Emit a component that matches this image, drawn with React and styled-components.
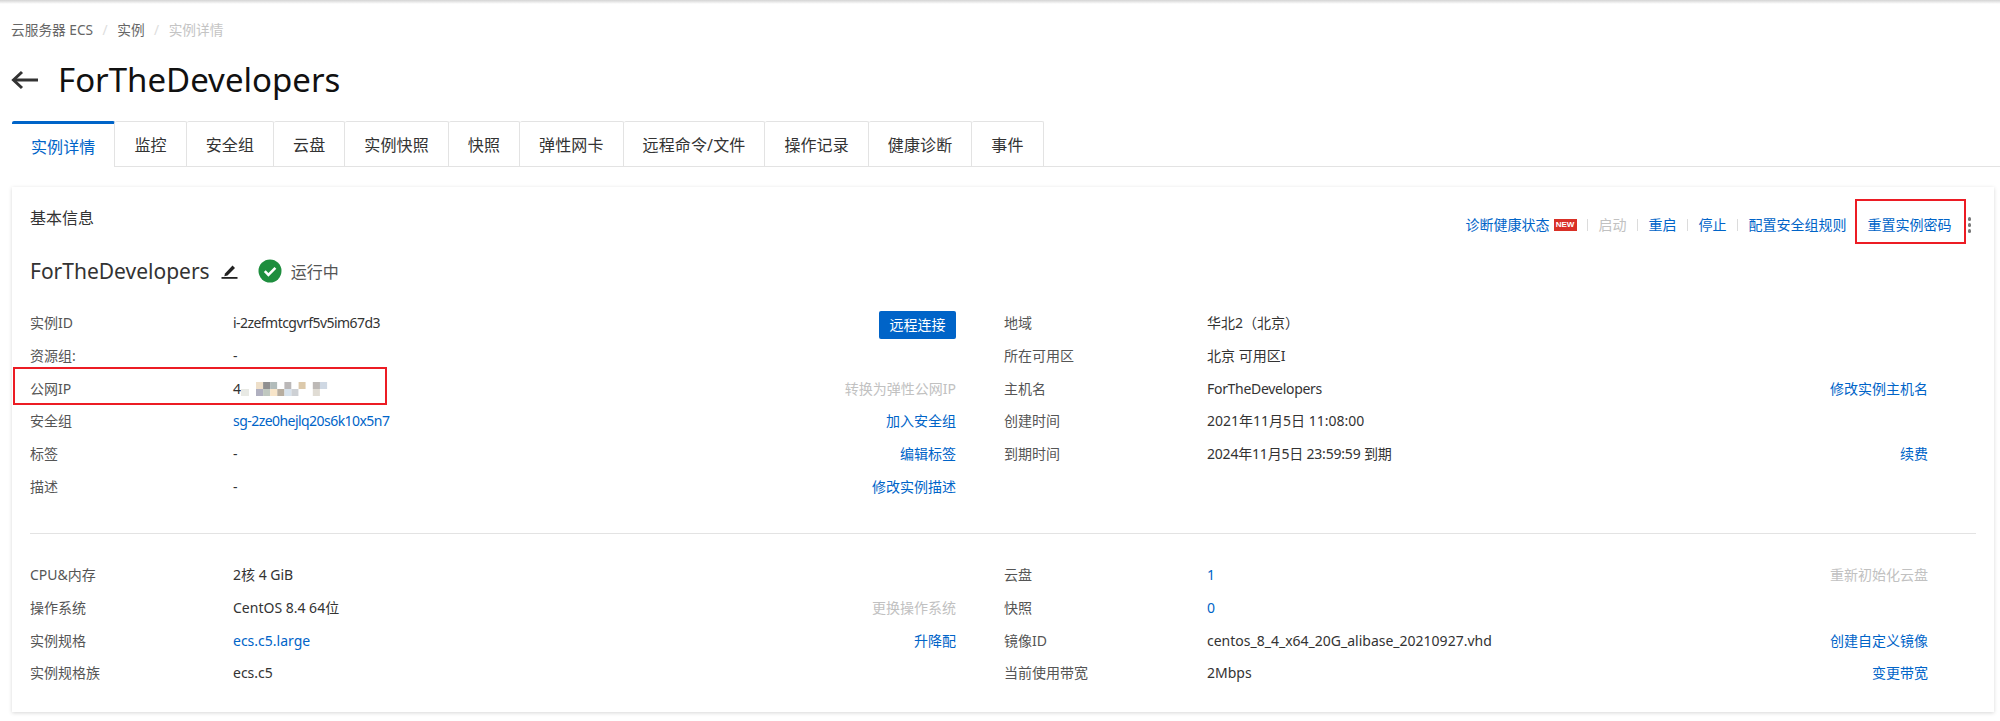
import React from 'react';
import styled, { createGlobalStyle } from 'styled-components';

const GlobalStyle = createGlobalStyle`
  html, body {
    margin: 0;
    padding: 0;
    background: #fff;
    font-family: "Noto Sans", "Noto Sans CJK SC", "Liberation Sans", sans-serif;
    font-size: 14px;
    color: #333;
  }
`;

const Page = styled.div`
  width: 2000px;
  height: 721px;
  overflow: hidden;
  position: relative;
  box-sizing: border-box;
  padding: 0 6px 0 12px;
`;

const TopShadow = styled.div`
  position: absolute;
  top: 0;
  left: 0;
  right: 0;
  height: 4px;
  background: linear-gradient(#d4d4d4, #fff);
`;

const Breadcrumb = styled.div`
  display: flex;
  align-items: center;
  height: 20px;
  padding-top: 20px;
  margin-left: -1px;
  color: #666;
  font-size: 13.7px;
  line-height: 20px;
`;

const Crumb = styled.span`
  color: ${props => (props.$current ? '#c4c4c4' : '#666')};
`;

const CrumbSep = styled.span`
  color: #ddd;
  margin: 0 9.5px;
`;

const TitleRow = styled.div`
  display: flex;
  align-items: center;
  height: 44px;
  margin: 18px 0 0 -1px;
  gap: 20px;
`;

const PageTitle = styled.h1`
  margin: 0;
  font-size: 33px;
  font-weight: 400;
  color: #111;
  line-height: 44px;
`;

const Tabs = styled.div`
  display: flex;
  margin: 19px -6px 0 0;
  height: 45px;
  border-bottom: 1px solid #e3e3e3;
`;

const Tab = styled.div`
  box-sizing: border-box;
  height: ${props => (props.$active ? '46px' : '45px')};
  padding: 0 19px;
  display: flex;
  align-items: center;
  font-size: 16px;
  letter-spacing: 0.12px;
  background: #fff;
  color: ${props => (props.$active ? '#0064c8' : '#333')};
  border: 1px solid #e3e3e3;
  border-left: none;
  border-top: ${props => (props.$active ? '3px solid #0064c8' : '1px solid #e3e3e3')};
  border-bottom: none;
  border-radius: 2px 2px 0 0;
`;

const Card = styled.section`
  margin-top: 20px;
  height: 525px;
  box-sizing: border-box;
  background: #fff;
  padding: 0 18px;
  box-shadow: 0 1px 4px rgba(0, 0, 0, 0.16);
`;

const CardHeader = styled.div`
  display: flex;
  justify-content: space-between;
  align-items: flex-start;
  height: 59px;
`;

const CardTitle = styled.h2`
  margin: 20px 0 0;
  font-size: 16px;
  font-weight: 400;
  line-height: 22px;
  color: #333;
`;

const ActionBar = styled.div`
  display: flex;
  align-items: center;
  height: 20px;
  margin: 28px 5px 0 0;
`;

const Action = styled.a`
  position: relative;
  color: ${props => (props.$disabled ? '#c1c1c1' : '#0064c8')};
  font-size: 14px;
  line-height: 20px;
  white-space: nowrap;
`;

const NewBadge = styled.span`
  width: 23px;
  height: 12px;
  margin-left: 4px;
  background: #d93026;
  color: #fff;
  font-size: 8px;
  font-weight: 700;
  line-height: 12px;
  text-align: center;
  font-family: "Liberation Sans", sans-serif;
`;

const Divider = styled.span`
  width: 1px;
  height: 12px;
  margin: 0 10.5px;
  background: #dcdcdc;
`;

const HighlightBox = styled.span`
  position: absolute;
  box-sizing: border-box;
  border: 2px solid #ec1c24;
  pointer-events: none;
`;

const ResetBox = styled(HighlightBox)`
  top: -16px;
  bottom: -9px;
  left: -13px;
  right: -14px;
`;

const IpBox = styled(HighlightBox)`
  top: -5px;
  bottom: 0;
  left: -17px;
  right: 569px;
`;

const ResetAction = styled(Action)`
  margin: 0 16px 0 21px;
`;

const Kebab = styled.span`
  display: flex;
  flex-direction: column;
  gap: 2.5px;
`;

const Dot = styled.i`
  width: 3.5px;
  height: 3.5px;
  border-radius: 50%;
  background: #777;
`;

const NameRow = styled.div`
  display: flex;
  align-items: center;
  height: 50px;
`;

const InstanceName = styled.span`
  font-size: 21px;
  color: #333;
  line-height: 28px;
`;

const StatusText = styled.span`
  font-size: 16px;
  color: #555;
  margin-left: 9px;
`;

const DetailGrid = styled.div`
  display: grid;
  grid-template-columns: 926px 924px;
  column-gap: 48px;
  margin-top: ${props => props.$top || 0}px;
`;

const Column = styled.div`
  display: flex;
  flex-direction: column;
`;

const Row = styled.div`
  position: relative;
  display: flex;
  align-items: center;
  height: 32.67px;
  line-height: 20px;
`;

const Label = styled.span`
  width: 203px;
  flex: none;
  color: #555;
`;

const Value = styled.span`
  flex: 1;
  display: flex;
  align-items: center;
  color: ${props => (props.$link ? '#0064c8' : '#333')};
  letter-spacing: ${props => props.$tracking || 0}px;
`;

const ConnectButton = styled.button`
  width: 77px;
  height: 28px;
  margin-top: 3px;
  padding: 0;
  border: 0;
  border-radius: 2px;
  background: #0064c8;
  color: #fff;
  font: inherit;
`;

const Rule = styled.hr`
  margin: 30px 0 25px;
  border: 0;
  height: 1px;
  background: #e3e3e3;
`;

const BackArrow = () => (
  <svg width="27" height="20" viewBox="0 0 27 20" fill="none" stroke="#333" strokeWidth="3">
    <path d="M27 10H3" />
    <path d="M11 2l-8.5 8 8.5 8" />
  </svg>
);

const EditIcon = () => (
  <svg width="17" height="16" viewBox="0 0 17 16" style={{ marginLeft: 11 }}>
    <path d="M4 10.5L11.5 2.5l2.5 2.5L6.5 12.5l-3.2.7z" fill="#222" />
    <rect x="0.5" y="14" width="16" height="1.8" fill="#222" />
  </svg>
);

const RunningIcon = () => (
  <svg width="24" height="24" viewBox="0 0 24 24" style={{ marginLeft: 20 }}>
    <circle cx="12" cy="12" r="11.5" fill="#1e8e3e" />
    <path d="M6.8 12.2l3.6 3.6 7-7" fill="none" stroke="#fff" strokeWidth="2.6" />
  </svg>
);

// mosaic over the public IP, in the order of the two pixel rows
const mosaic = [
  ['#eedfc9', '#908f90', '#b2bcbb', '#fff', '#bbb8b8', '#fff', '#dcc9ab', '#fff', '#bdb9b6', '#cfd8e3'],
  ['#b0b0c0', '#c0c8c0', '#f8e5c9', '#b8aea0', '#d7e2ec', '#cdd0d4', '#fff', '#fff', '#e0dcd4', '#fff'],
];

const IpMosaic = () => (
  <svg width="88" height="14" viewBox="0 0 88 14">
    <rect x="0" y="7" width="8" height="7" fill="#e8e9e4" />
    {mosaic.map((cells, y) =>
      cells.map((fill, x) => (
        <rect key={`${y}-${x}`} x={15 + x * 7.1} y={y * 7} width="7.2" height="7" fill={fill} />
      ))
    )}
  </svg>
);

const tabs = ['实例详情', '监控', '安全组', '云盘', '实例快照', '快照', '弹性网卡', '远程命令/文件', '操作记录', '健康诊断', '事件'];

const Detail = ({ label, value, link, action, disabled, tracking }) => (
  <Row>
    <Label>{label}</Label>
    <Value $link={link} $tracking={tracking}>{value}</Value>
    {action && <Action $disabled={disabled}>{action}</Action>}
  </Row>
);

export default function App() {
  return (
    <Page>
      <GlobalStyle />
      <TopShadow />
      <Breadcrumb>
        <Crumb>云服务器 ECS</Crumb>
        <CrumbSep>/</CrumbSep>
        <Crumb>实例</Crumb>
        <CrumbSep>/</CrumbSep>
        <Crumb $current>实例详情</Crumb>
      </Breadcrumb>
      <TitleRow>
        <BackArrow />
        <PageTitle>ForTheDevelopers</PageTitle>
      </TitleRow>
      <Tabs>
        {tabs.map((name, i) => (
          <Tab key={name} $active={i === 0}>{name}</Tab>
        ))}
      </Tabs>
      <Card>
        <CardHeader>
          <CardTitle>基本信息</CardTitle>
          <ActionBar>
            <Action>诊断健康状态</Action>
            <NewBadge>NEW</NewBadge>
            <Divider />
            <Action $disabled>启动</Action>
            <Divider />
            <Action>重启</Action>
            <Divider />
            <Action>停止</Action>
            <Divider />
            <Action>配置安全组规则</Action>
            <ResetAction>
              重置实例密码
              <ResetBox />
            </ResetAction>
            <Kebab>
              <Dot />
              <Dot />
              <Dot />
            </Kebab>
          </ActionBar>
        </CardHeader>
        <NameRow>
          <InstanceName>ForTheDevelopers</InstanceName>
          <EditIcon />
          <RunningIcon />
          <StatusText>运行中</StatusText>
        </NameRow>
        <DetailGrid $top={11}>
          <Column>
            <Row>
              <Label>实例ID</Label>
              <Value $tracking={-0.55}>i-2zefmtcgvrf5v5im67d3</Value>
              <ConnectButton>远程连接</ConnectButton>
            </Row>
            <Detail label="资源组:" value="-" />
            <Row>
              <Label>公网IP</Label>
              <Value>4<IpMosaic /></Value>
              <Action $disabled>转换为弹性公网IP</Action>
              <IpBox />
            </Row>
            <Detail label="安全组" value="sg-2ze0hejlq20s6k10x5n7" link tracking={-0.55} action="加入安全组" />
            <Detail label="标签" value="-" action="编辑标签" />
            <Detail label="描述" value="-" action="修改实例描述" />
          </Column>
          <Column>
            <Detail label="地域" value="华北2（北京）" />
            <Detail label="所在可用区" value="北京 可用区I" />
            <Detail label="主机名" value="ForTheDevelopers" tracking={-0.3} action="修改实例主机名" />
            <Detail label="创建时间" value="2021年11月5日 11:08:00" />
            <Detail label="到期时间" value="2024年11月5日 23:59:59 到期" tracking={-0.2} action="续费" />
          </Column>
        </DetailGrid>
        <Rule />
        <DetailGrid>
          <Column>
            <Detail label="CPU&内存" value="2核 4 GiB" />
            <Detail label="操作系统" value="CentOS 8.4 64位" action="更换操作系统" disabled />
            <Detail label="实例规格" value="ecs.c5.large" link action="升降配" />
            <Detail label="实例规格族" value="ecs.c5" />
          </Column>
          <Column>
            <Detail label="云盘" value="1" link action="重新初始化云盘" disabled />
            <Detail label="快照" value="0" link />
            <Detail label="镜像ID" value="centos_8_4_x64_20G_alibase_20210927.vhd" action="创建自定义镜像" />
            <Detail label="当前使用带宽" value="2Mbps" action="变更带宽" />
          </Column>
        </DetailGrid>
      </Card>
    </Page>
  );
}
